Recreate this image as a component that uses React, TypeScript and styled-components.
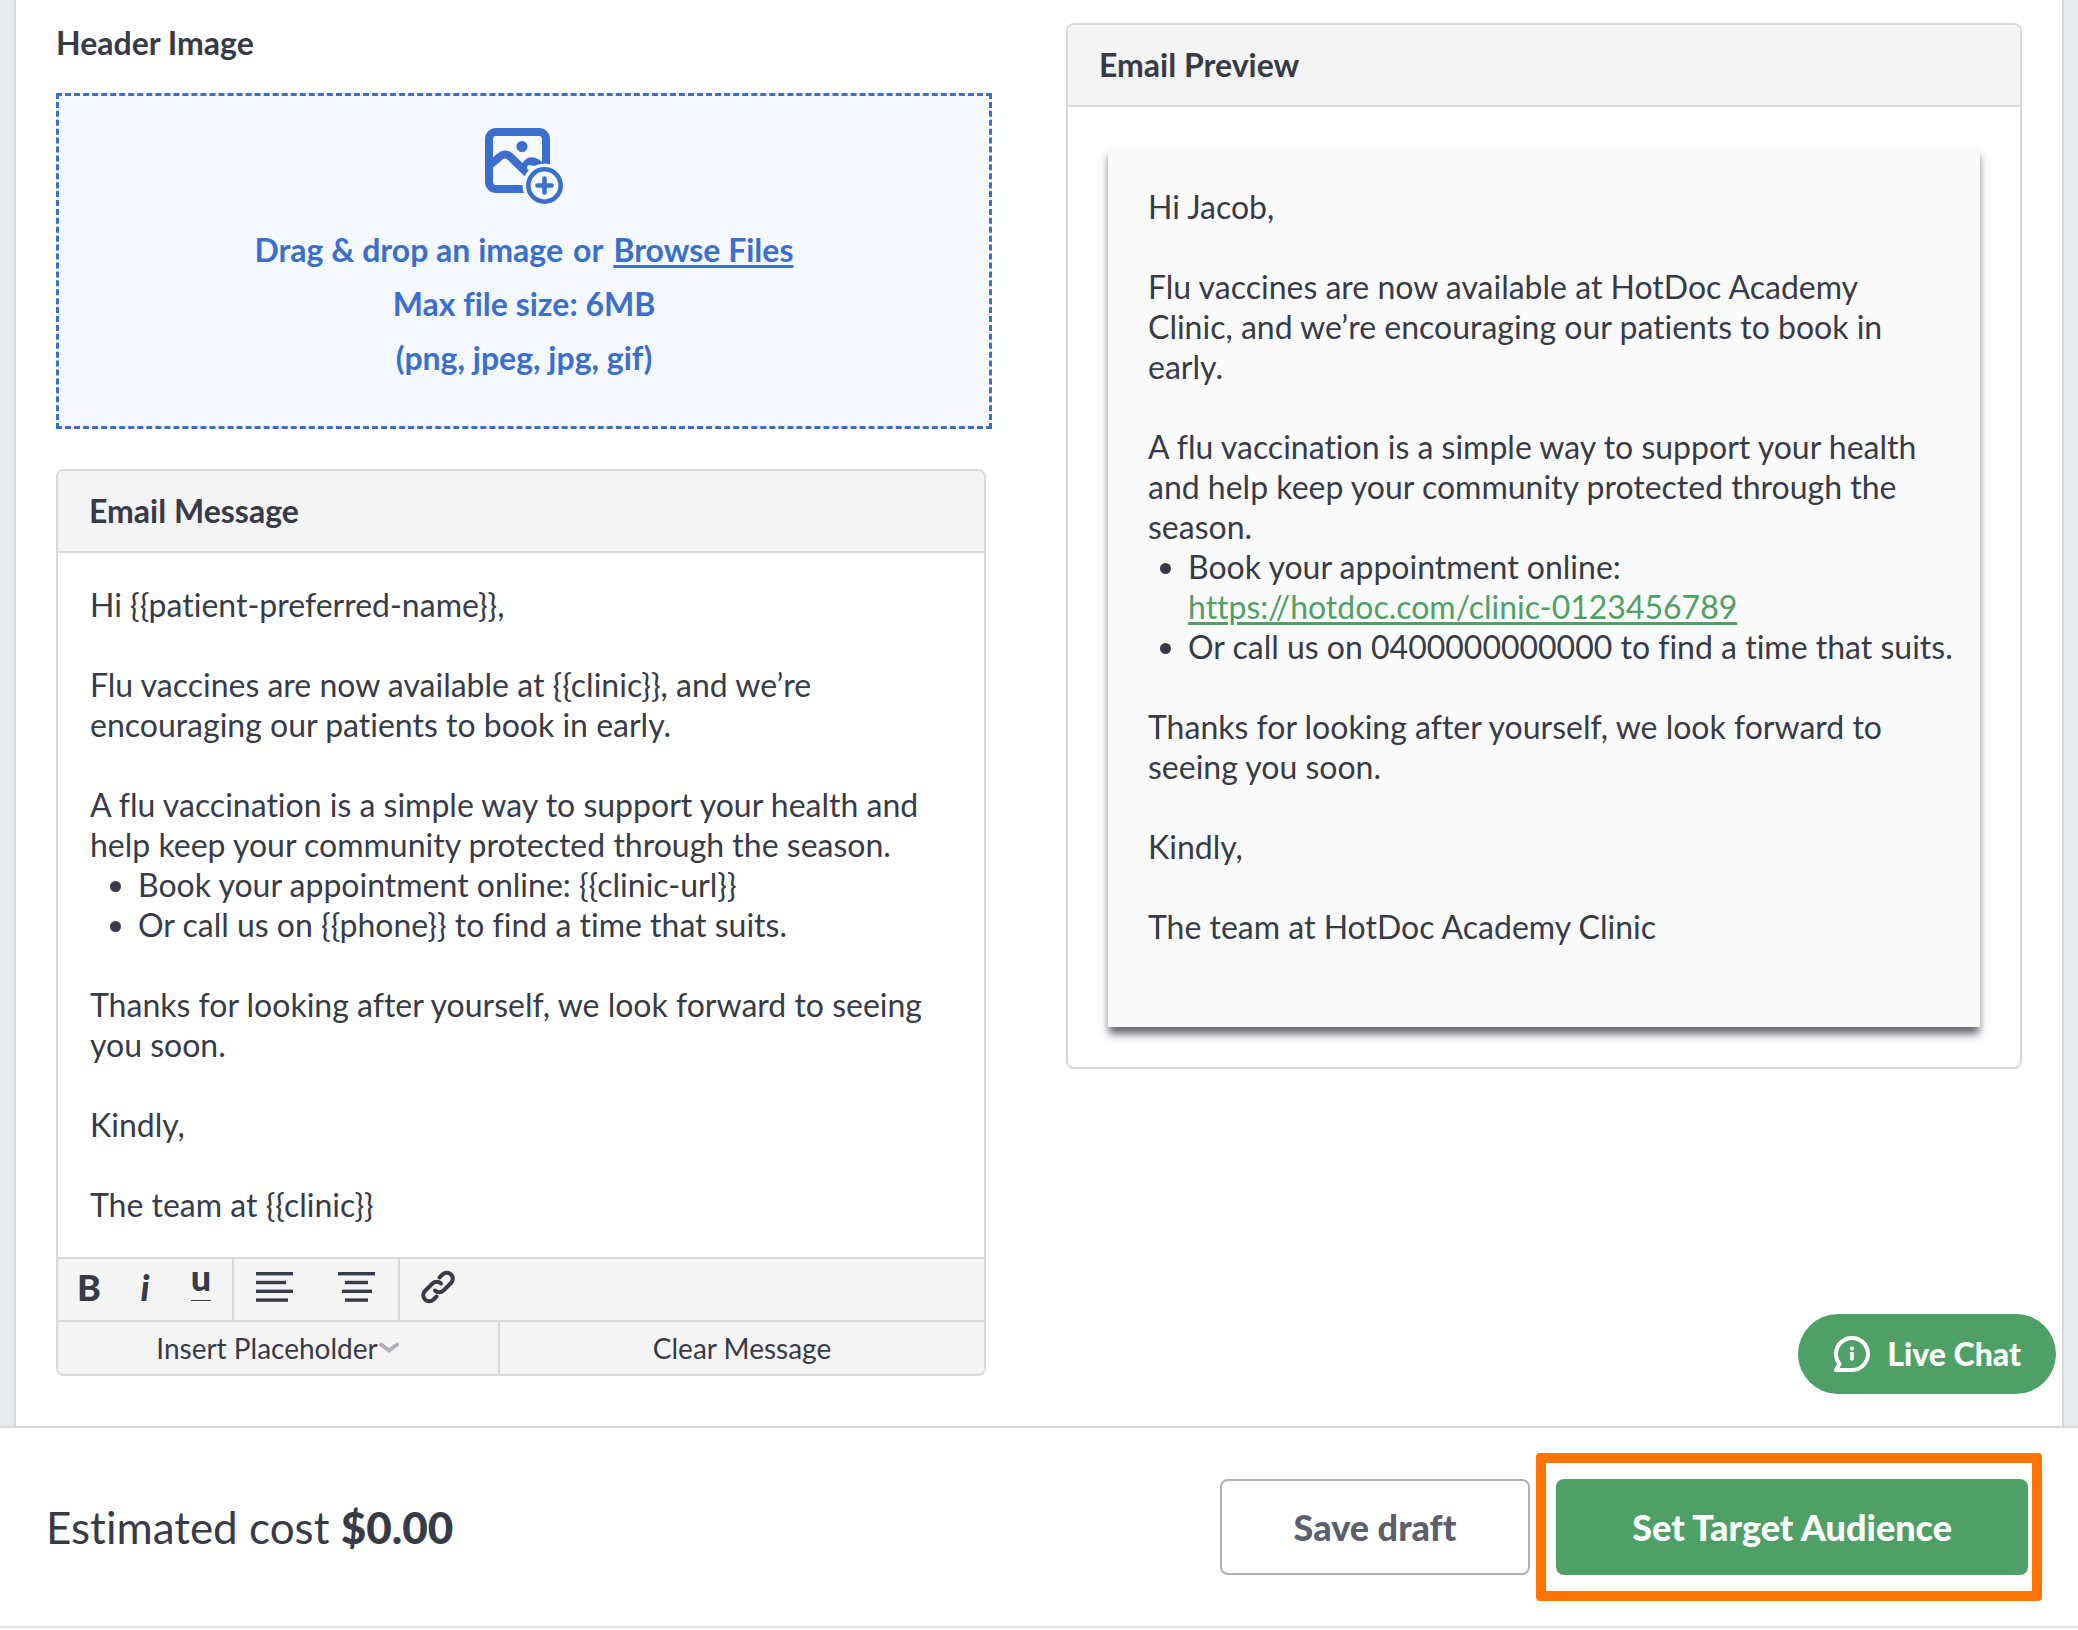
import React from "react";
import styled, { createGlobalStyle, css } from "styled-components";

const color = {
  ink: "#373b48",
  muted: "#5b5f6b",
  line: "#d7d8da",
  panel: "#f4f4f4",
  paper: "#fafafa",
  gutter: "#e9eaec",
  blue: "#3b6fcd",
  blueTint: "#f5f9ff",
  green: "#4fa066",
  orange: "#ff7400",
};

const GlobalStyle = createGlobalStyle`
  *, *::before, *::after { box-sizing: border-box; }
  body {
    margin: 0;
    background: ${color.paper};
    color: ${color.ink};
    font-family: Lato, "Open Sans", sans-serif;
    font-size: 32px;
    line-height: 40px;
    font-variant-ligatures: none;
  }
  button { font: inherit; color: inherit; cursor: pointer; }
`;

const Page = styled.div`
  display: flex;
  flex-direction: column;
  min-height: 100vh;
`;

const Backdrop = styled.main`
  flex: 1;
  display: flex;
  padding: 0 14px;
  background: ${color.gutter};
`;

const Sheet = styled.div`
  flex: 1;
  display: grid;
  grid-template-columns: minmax(0, 936fr) minmax(0, 956fr);
  align-items: start;
  gap: 74px;
  padding: 23px 40px 50px;
  background: #fff;
  border: solid ${color.line};
  border-width: 0 2px;
`;

const Column = styled.section`
  display: flex;
  flex-direction: column;
`;

const Heading = styled.h2`
  margin: 0;
  font-size: 32px;
  font-weight: 700;
  line-height: 40px;
`;

const DropZone = styled.div`
  display: flex;
  flex-direction: column;
  align-items: center;
  margin: 30px 0 40px;
  padding: 32px 32px 41px;
  background: ${color.blueTint};
  border: 3px dashed ${color.blue};
  color: ${color.blue};
  font-weight: 700;
  line-height: 54px;
  text-align: center;

  svg { margin-bottom: 18px; }
`;

const DropText = styled.p`
  display: flex;
  gap: 10px;
  margin: 0;
`;

const BrowseButton = styled.button`
  padding: 0;
  background: none;
  border: 0;
  text-decoration: underline;
  text-decoration-thickness: 3px;
  text-underline-offset: 3px;
`;

const Card = styled.div<{ $inset?: boolean }>`
  margin-right: ${(p) => (p.$inset ? "6px" : "0")};
  border: 2px solid ${color.line};
  border-radius: 8px;
  overflow: hidden;
`;

const CardHeader = styled.header`
  padding: 20px 31px;
  background: ${color.panel};
  border-bottom: 2px solid ${color.line};
`;

const messageText = css`
  p { margin: 0 0 40px; }
  p.lead { margin-bottom: 0; }
  ul { margin: 0 0 40px; }
  p:last-child { margin-bottom: 0; }
`;

const Editor = styled.div`
  padding: 32px;
  outline: none;
  ${messageText}
  ul { padding-left: 48px; }
`;

const PreviewArea = styled.div`
  padding: 40px;
`;

const Paper = styled.article`
  padding: 40px 40px 80px;
  background: ${color.paper};
  box-shadow: 0 8px 8px -1px rgba(55, 59, 72, 0.78);
  ${messageText}
  ul { margin-right: -24px; padding-left: 40px; }
  a { display: block; color: ${color.green}; text-underline-offset: 3px; }
`;

const Toolbar = styled.div`
  display: flex;
  height: 63px;
  background: ${color.panel};
  border-top: 2px solid ${color.line};
`;

const ToolGroup = styled.div<{ $padded?: boolean; $last?: boolean }>`
  display: flex;
  padding: ${(p) => (p.$padded ? "0 3px" : "0")};
  border-right: ${(p) => (p.$last ? "0" : `2px solid ${color.line}`)};
`;

const Tool = styled.button<{ $width?: number }>`
  display: grid;
  place-items: center;
  width: ${(p) => p.$width ?? 56}px;
  padding: 0 0 6px;
  background: none;
  border: 0;
  font-size: 36px;
  font-weight: 900;
`;

const UnderlineMark = styled.span`
  align-self: start;
  margin-top: 4px;
  padding-bottom: 9px;
  line-height: 28px;
  border-bottom: 1px solid ${color.ink};
`;

const Actions = styled.div`
  display: grid;
  grid-template-columns: 442fr 484fr;
  background: ${color.panel};
  border-top: 2px solid ${color.line};
`;

const Action = styled.button<{ $divided?: boolean }>`
  display: flex;
  align-items: center;
  justify-content: center;
  height: 52px;
  padding: 0;
  background: none;
  border: 0;
  border-right: ${(p) => (p.$divided ? `2px solid ${color.line}` : "0")};
  font-size: 28px;
`;

const Footer = styled.footer`
  position: sticky;
  bottom: 0;
  display: flex;
  align-items: center;
  gap: 6px;
  padding: 25px 36px 25px 46px;
  background: #fff;
  border: solid ${color.line};
  border-width: 2px 0;
  border-bottom-color: #e7e7e8;
  margin-bottom: 2px;
`;

const Cost = styled.p`
  flex: 1;
  margin: 0;
  font-size: 44px;
  line-height: 56px;

  strong { font-weight: 900; }
`;

const FooterButton = styled.button<{ $primary?: boolean }>`
  height: 96px;
  padding: 0 ${(p) => (p.$primary ? "74px" : "72px")};
  border-radius: 8px;
  border: 2px solid ${(p) => (p.$primary ? color.green : "#afb0b6")};
  background: ${(p) => (p.$primary ? color.green : "#fff")};
  color: ${(p) => (p.$primary ? "#fff" : color.muted)};
  font-size: 36px;
  font-weight: 900;
`;

const Highlight = styled.div`
  padding: 16px 4px 16px 10px;
  border: 10px solid ${color.orange};
  border-radius: 4px;
`;

const ChatButton = styled.button`
  position: fixed;
  right: 22px;
  bottom: 236px;
  z-index: 1;
  display: flex;
  align-items: center;
  gap: 17px;
  height: 80px;
  padding: 0 35px 0 36px;
  background: ${color.green};
  border: 0;
  border-radius: 40px;
  color: #fff;
  font-weight: 900;
`;

const AddImageIcon = () => (
  <svg width="79" height="77" viewBox="0 0 79 77" fill="none" stroke={color.blue} aria-hidden="true">
    <rect x="4" y="4" width="57" height="57" rx="7" strokeWidth="8" />
    <circle cx="37" cy="18.500" r="5.500" fill={color.blue} stroke="none" />
    <path d="M5 37L15 28.500Q20 24.500 25 28.500L40 43L41 37Q45 31 52 35L60 42" strokeWidth="8" />
    <circle cx="59.500" cy="57.500" r="22" fill={color.blueTint} stroke="none" />
    <circle cx="44.500" cy="39.500" r="2.500" fill={color.blueTint} stroke="none" />
    <circle cx="59.500" cy="57.500" r="16.200" strokeWidth="4.600" />
    <path d="M52.500 57.500h14M59.500 50.500v14" strokeWidth="4.600" strokeLinecap="round" />
  </svg>
);

const AlignIcon = ({ rows }: { rows: [number, number][] }) => (
  <svg width="38" height="32" viewBox="0 0 38 32" fill={color.ink} aria-hidden="true">
    {rows.map(([x, width], i) => (
      <rect key={i} x={x} y={1 + i * 8.8} width={width} height="3.400" />
    ))}
  </svg>
);

const LinkIcon = () => (
  <svg width="34" height="34" viewBox="0 0 34 34" fill="none" stroke={color.ink} strokeWidth="4" strokeLinecap="round" aria-hidden="true">
    <path d="M18.500 7.500L21.500 4.500A6 6 0 0 1 30 13L22.500 20.500A6 6 0 0 1 14 20.500" />
    <path d="M15.500 26.500L12.500 29.500A6 6 0 0 1 4 21L11.500 13.500A6 6 0 0 1 20 13.500" />
  </svg>
);

const ChevronIcon = () => (
  <svg width="22" height="12" viewBox="0 0 22 12" fill="none" stroke="#b0b1b7" strokeWidth="4" strokeLinecap="round" aria-hidden="true">
    <path d="M3 2.500L11 8.500L19 2.500" />
  </svg>
);

const ChatIcon = () => (
  <svg width="36" height="36" viewBox="0 0 36 36" fill="none" stroke="#fff" strokeWidth="4" strokeLinejoin="round" strokeLinecap="round" aria-hidden="true">
    <path d="M2 34H18A16 16 0 1 0 5.500 28Z" />
    <circle cx="18" cy="12.500" r="2.100" fill="#fff" stroke="none" />
    <path d="M17.500 17.500H18V23" strokeWidth="3.600" />
  </svg>
);

export default function App() {
  return (
    <Page>
      <GlobalStyle />
      <Backdrop>
        <Sheet>
          <Column>
            <Heading>Header Image</Heading>
            <DropZone>
              <AddImageIcon />
              <DropText>
                <span>Drag &amp; drop an image</span>
                <span>or</span>
                <BrowseButton type="button">Browse Files</BrowseButton>
              </DropText>
              <DropText>Max file size: 6MB</DropText>
              <DropText>(png, jpeg, jpg, gif)</DropText>
            </DropZone>

            <Card $inset>
              <CardHeader>
                <Heading id="message-title">Email Message</Heading>
              </CardHeader>
              <Editor
                role="textbox"
                aria-multiline="true"
                aria-labelledby="message-title"
                contentEditable
                suppressContentEditableWarning
                spellCheck={false}
              >
                <p>{"Hi {{patient-preferred-name}},"}</p>
                <p>{"Flu vaccines are now available at {{clinic}}, and we’re encouraging our patients to book in early."}</p>
                <p className="lead">
                  A flu vaccination is a simple way to support your health and help keep your community
                  protected through the season.
                </p>
                <ul>
                  <li>{"Book your appointment online: {{clinic-url}}"}</li>
                  <li>{"Or call us on {{phone}} to find a time that suits."}</li>
                </ul>
                <p>Thanks for looking after yourself, we look forward to seeing you soon.</p>
                <p>Kindly,</p>
                <p>{"The team at {{clinic}}"}</p>
              </Editor>
              <Toolbar role="toolbar" aria-label="Formatting">
                <ToolGroup $padded>
                  <Tool type="button" aria-label="Bold">B</Tool>
                  <Tool type="button" aria-label="Italic"><em>i</em></Tool>
                  <Tool type="button" aria-label="Underline"><UnderlineMark>u</UnderlineMark></Tool>
                </ToolGroup>
                <ToolGroup>
                  <Tool type="button" $width={82} aria-label="Align left">
                    <AlignIcon rows={[[0, 37], [0, 30], [0, 37], [0, 32]]} />
                  </Tool>
                  <Tool type="button" $width={82} aria-label="Align centre">
                    <AlignIcon rows={[[0, 37], [7, 23], [4, 30], [7, 23]]} />
                  </Tool>
                </ToolGroup>
                <ToolGroup $last>
                  <Tool type="button" $width={76} aria-label="Insert link"><LinkIcon /></Tool>
                </ToolGroup>
              </Toolbar>
              <Actions>
                <Action type="button" $divided aria-haspopup="menu">
                  Insert Placeholder
                  <ChevronIcon />
                </Action>
                <Action type="button">Clear Message</Action>
              </Actions>
            </Card>
          </Column>

          <Column>
            <Card>
              <CardHeader>
                <Heading>Email Preview</Heading>
              </CardHeader>
              <PreviewArea>
                <Paper>
                  <p>Hi Jacob,</p>
                  <p>
                    Flu vaccines are now available at HotDoc Academy Clinic, and we’re encouraging our
                    patients to book in early.
                  </p>
                  <p className="lead">
                    A flu vaccination is a simple way to support your health and help keep your community
                    protected through the season.
                  </p>
                  <ul>
                    <li>
                      Book your appointment online:{" "}
                      <a href="https://hotdoc.com/clinic-0123456789">https://hotdoc.com/clinic-0123456789</a>
                    </li>
                    <li>Or call us on 0400000000000 to find a time that suits.</li>
                  </ul>
                  <p>Thanks for looking after yourself, we look forward to seeing you soon.</p>
                  <p>Kindly,</p>
                  <p>The team at HotDoc Academy Clinic</p>
                </Paper>
              </PreviewArea>
            </Card>
          </Column>
        </Sheet>
      </Backdrop>

      <ChatButton type="button">
        <ChatIcon />
        Live Chat
      </ChatButton>

      <Footer>
        <Cost>
          Estimated cost <strong>$0.00</strong>
        </Cost>
        <FooterButton type="button">Save draft</FooterButton>
        <Highlight>
          <FooterButton type="button" $primary>Set Target Audience</FooterButton>
        </Highlight>
      </Footer>
    </Page>
  );
}
